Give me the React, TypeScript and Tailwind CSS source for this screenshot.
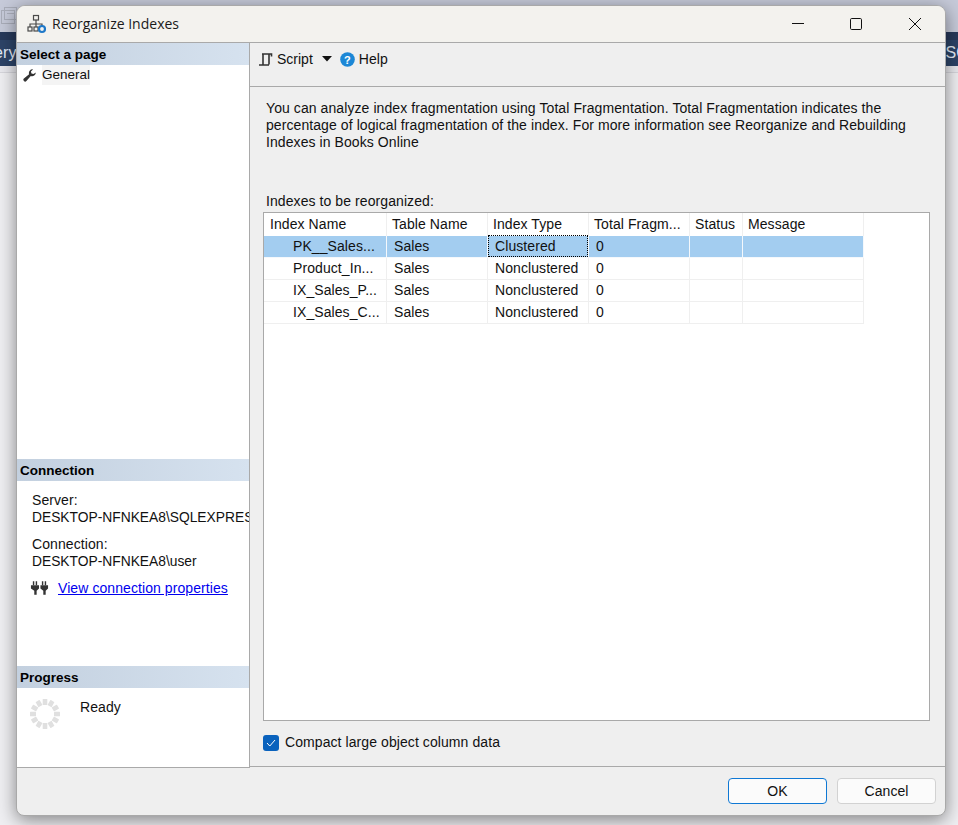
import React from "react";

const cols = "grid-cols-[123px_101px_101px_101px_53px_121px]";

function SectionHead({ children }: { children: React.ReactNode }) {
  return (
    <div className="h-[22px] shrink-0 pl-[3px] pt-[2px] flex items-center font-bold text-[13.5px] tracking-normal text-black bg-gradient-to-r from-[#c3d0df] to-[#d6e2ef]">
      {children}
    </div>
  );
}

function Row({ name, type, selected }: { name: string; type: string; selected?: boolean }) {
  const bg = selected ? "bg-[#a3cdf0] border-[#f4f8fc]" : "bg-white border-[#efefef]";
  const cell = `h-[22px] flex items-center border-r border-b whitespace-nowrap ${bg}`;
  return (
    <div className={`grid ${cols} w-fit`}>
      <div className={`${cell} pl-[29px]`}>{name}</div>
      <div className={`${cell} pl-[7px]`}>Sales</div>
      <div className={`${cell} pl-[7px] relative`}>
        {type}
        {selected && <span className="absolute inset-0 -top-px border border-dotted border-black" />}
      </div>
      <div className={`${cell} pl-[7px]`}>0</div>
      <div className={cell}></div>
      <div className={cell}></div>
    </div>
  );
}

function Spinner() {
  const segs = Array.from({ length: 12 }, (_, i) => i * 30);
  return (
    <svg width="30" height="30" viewBox="0 0 30 30">
      {segs.map((a) => (
        <rect key={a} x="12.7" y="0" width="4.600" height="6" rx="0.5" fill="#e0e0e0" transform={`rotate(${a} 15 15)`} />
      ))}
    </svg>
  );
}

export default function App() {
  return (
    <div className="relative h-[825px] w-[958px] overflow-hidden bg-[#efeff2] font-['Liberation_Sans',Arial,sans-serif] text-[14px] tracking-[0.08px] text-[#111]">
      <div className="h-[32px] bg-[#c6cad9] relative">
        <svg className="absolute left-[1px] top-[7px]" width="16" height="18" viewBox="0 0 16 18" fill="none" stroke="#a9adb9" strokeWidth="1">
          <rect x="0.500" y="3.500" width="13" height="13" />
          <rect x="3.500" y="0.500" width="12" height="12" />
          <path d="M6 6.500h7" />
        </svg>
      </div>
      <div className="h-[8px] bg-[#27395a]" />
      <div className="h-[26px] bg-[#2d4468] text-[#e6eefa] text-[16px] flex items-center justify-between overflow-hidden">
        <span className="-ml-[6px]">ery</span>
        <span className="-mr-[10px]">SC</span>
      </div>
      <div className="h-[7px] bg-[#e9e9ee] border-b border-[#d6d6dc]" />

      {/* dialog window */}
      <div className="absolute left-[16px] top-[5px] w-[930px] h-[811px] flex flex-col rounded-t-[9px] rounded-b-[8px] border border-[#a9a9a9] bg-[#efefef] shadow-[0_4px_18px_rgba(0,0,0,0.45)] overflow-hidden">
        {/* title bar */}
        <div className="h-[37px] shrink-0 flex items-center pb-[1px] bg-[#f3f2ee] border-b border-[#a9a9a9]">
          <svg className="ml-[10px]" width="20" height="20" viewBox="0 0 20 20" fill="none" stroke="#4a4a4a" strokeWidth="1.2">
            <rect x="6.500" y="1.500" width="5" height="4.500" />
            <path d="M9 6v4M3 13v-3h12v3M9 10v3" />
            <rect x="1" y="13" width="4" height="4" />
            <rect x="7" y="13" width="4" height="4" />
            <circle cx="15" cy="15" r="3" stroke="#1e78c8" strokeWidth="2.200" />
          </svg>
          <span className="ml-[5px] font-['Open_Sans',sans-serif] text-[14px] tracking-normal text-[#1a1a1a] flex-1">Reorganize Indexes</span>
          <div className="flex items-center mr-[23px]">
            <svg className="mr-[46px]" width="12" height="12" viewBox="0 0 12 12">
              <path d="M0 5.500h12" stroke="#111" strokeWidth="1" />
            </svg>
            <svg className="mr-[46px]" width="12" height="12" viewBox="0 0 12 12" fill="none">
              <rect x="0.500" y="0.500" width="11" height="11" rx="1.200" stroke="#111" />
            </svg>
            <svg width="14" height="14" viewBox="0 0 14 14">
              <path d="M1 1l12 12M13 1L1 13" stroke="#111" strokeWidth="1" />
            </svg>
          </div>
        </div>

        {/* main */}
        <div className="flex-1 flex min-h-0">
          {/* sidebar */}
          <div className="w-[233px] shrink-0 flex flex-col bg-white border-r border-b border-[#a9a9a9] overflow-hidden">
            <SectionHead>Select a page</SectionHead>
            <div className="flex-1 min-h-0">
              <div className="flex items-center h-[20px] pl-[6px]">
                <svg width="13" height="13" viewBox="0 0 13 13" fill="#333">
                  <path d="M12.800 3.400a3.700 3.700 0 0 1-5 3.500L3.400 12a1.700 1.700 0 0 1-2.500-2.400l5.200-4.300A3.700 3.700 0 0 1 10 .4L7.900 2.600l.6 2 2 .5z" />
                </svg>
                <span className="ml-[6px] bg-[#f4f4f4] text-[13.500px] tracking-normal">General</span>
              </div>
            </div>
            <SectionHead>Connection</SectionHead>
            <div className="h-[185px] shrink-0 pl-[15px] pt-[12px] leading-[15px] whitespace-nowrap overflow-hidden">
              <div>Server:</div>
              <div className="mt-[2px] text-[13.800px] tracking-normal">DESKTOP-NFNKEA8\SQLEXPRESS</div>
              <div className="mt-[12px]">Connection:</div>
              <div className="mt-[2px] text-[13.800px] tracking-normal">DESKTOP-NFNKEA8\user</div>
              <div className="flex items-center mt-[10px] -ml-[2px]">
                <svg width="19" height="18" viewBox="0 0 20 18" fill="#333">
                  <path d="M3 2h1.500v4H3zM6 2h1.500v4H6zM12.500 2H14v4h-1.500zM15.500 2H17v4h-1.500z" />
                  <path d="M1 6h8.500v3.500L7 12v4H4.500v-4L1 9.500zM11 6h8v3.500L16.500 12v4H14v-4l-3-2.500z" />
                </svg>
                <a className="ml-[9px] text-[#0000ee] underline">View connection properties</a>
              </div>
            </div>
            <SectionHead>Progress</SectionHead>
            <div className="h-[79px] shrink-0 flex items-start pl-[13px] pt-[11px]">
              <Spinner />
              <span className="ml-[20px] -mt-[2px]">Ready</span>
            </div>
          </div>

          {/* right pane */}
          <div className="flex-1 flex flex-col min-w-0 mb-[1px] border-b border-[#a9a9a9]">
            <div className="h-[44px] shrink-0 flex items-start pt-[7px] pl-[8px] border-b border-[#a9a9a9]">
              <div className="flex items-center h-[18px]">
                <svg width="15" height="15" viewBox="0 0 15 15" fill="none" stroke="#333" strokeWidth="1.600">
                  <path d="M4 2h9.500v2.500M5 2v10.500M11 2v10.500M1 13h10" />
                </svg>
                <span className="ml-[4px] tracking-normal">Script</span>
                <svg className="ml-[9px]" width="10" height="6" viewBox="0 0 10 6" fill="#111">
                  <path d="M0 0h10L5 5.500z" />
                </svg>
                <svg className="ml-[8px]" width="15" height="15" viewBox="0 0 15 15">
                  <circle cx="7.500" cy="7.500" r="7.300" fill="#1c87d6" />
                  <text x="7.500" y="11.500" textAnchor="middle" fontSize="11" fontWeight="bold" fill="#fff" fontFamily="Liberation Sans">?</text>
                </svg>
                <span className="ml-[4px]">Help</span>
              </div>
            </div>
            <div className="flex-1 flex flex-col min-h-0 pl-[13px] pr-[15px] pt-[13px]">
              <p className="leading-[17px] pl-[3px] w-[650px] h-[94px] shrink-0">
                You can analyze index fragmentation using Total Fragmentation. Total Fragmentation indicates the percentage of logical fragmentation of the index. For more information see Reorganize and Rebuilding Indexes in Books Online
              </p>
              <div className="pl-[3px] h-[18px] leading-[15px] shrink-0">Indexes to be reorganized:</div>
              <div className="h-[509px] shrink-0 bg-white border border-[#a9a9a9]">
                <div className={`grid ${cols} w-fit`}>
                  {["Index Name", "Table Name", "Index Type", "Total Fragm...", "Status", "Message"].map((h) => (
                    <div key={h} className="h-[23px] flex items-center pl-[5px] first:pl-[6px] border-r border-[#efefef] whitespace-nowrap">
                      {h}
                    </div>
                  ))}
                </div>
                <Row name="PK__Sales..." type="Clustered" selected />
                <Row name="Product_In..." type="Nonclustered" />
                <Row name="IX_Sales_P..." type="Nonclustered" />
                <Row name="IX_Sales_C..." type="Nonclustered" />
              </div>
              <div className="flex items-center mt-[11px]">
                <span className="w-[16px] h-[16px] rounded-[3px] bg-[#0a62bd] flex items-center justify-center">
                  <svg width="10" height="8" viewBox="0 0 10 8" fill="none" stroke="#fff" strokeWidth="1">
                    <path d="M1 4l2.800 3L9 1" />
                  </svg>
                </span>
                <span className="ml-[6px]">Compact large object column data</span>
              </div>
            </div>
          </div>
        </div>

        {/* footer */}
        <div className="h-[47px] shrink-0 flex justify-end items-start gap-[10px] pt-[10px] pr-[9px]">
          <button className="w-[99px] h-[26px] pt-[1px] rounded-[4px] bg-[#fbfbfb] border border-[#0f78d4] text-[#111]">OK</button>
          <button className="w-[99px] h-[26px] pt-[1px] rounded-[4px] bg-[#fbfbfb] border border-[#d2d2d2] text-[#111]">Cancel</button>
        </div>
      </div>
    </div>
  );
}
